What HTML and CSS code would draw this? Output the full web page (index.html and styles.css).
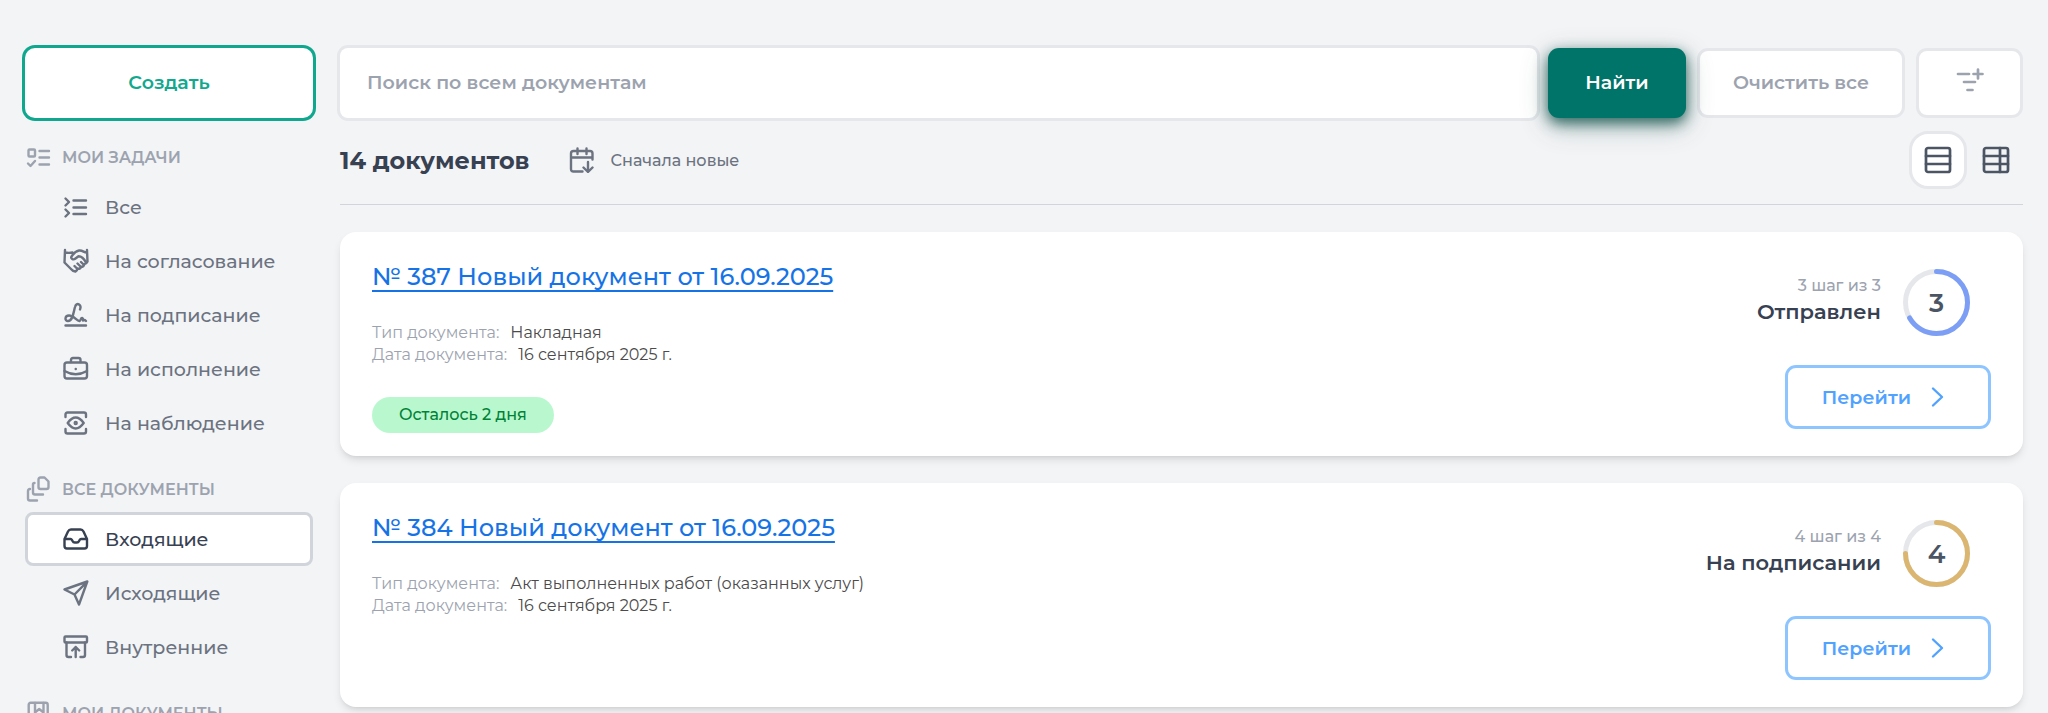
FILE: index.html
```html
<!DOCTYPE html>
<html lang="ru">
<head>
  <meta charset="UTF-8" />
  <meta name="viewport" content="width=device-width, initial-scale=1.0"/>
  <title>Входящие документы</title>
  <link rel="stylesheet" href="styles.css">
</head>
<body>
  <div class="layout">
    <aside class="sidebar">
      <button class="create-btn" type="button">Создать</button>

      <nav>
        <h2 class="menu-title">
          <svg class="icon" viewBox="-1 0 26 26"><rect x="2.5" y="5.5" width="6.5" height="7" rx="1"/><path d="M2 19.5 4.5 22 9 17M13.5 7H23M13.5 13.5H23M13.5 20.5H23"/></svg>
          МОИ ЗАДАЧИ
        </h2>
        <ul class="menu">
          <li><a class="menu-item" href="#">
            <svg class="icon" viewBox="0 0 26 26"><path d="m2.5 4.5 3.5 3.5-3.5 3.5M2.5 15.5 6 19l-3.5 3.5M10.5 6.5H23M10.5 13.5H23M10.5 20H23"/></svg>
            Все</a></li>
          <li><a class="menu-item" href="#">
            <svg class="icon" viewBox="0 0 26 26"><path d="M2 2 1.5 14.5 8 21q2.5 3 4.5 2M24 2l.5 11.5q-1 2.5-4 3M2 4.5q4 .8 7.500 0M24 4.5c-3 .5-4-2.5-8-2-3 .5-5.5 3-7.500 6-1 2 1.500 4 4 2l3-2.300c2 0 5 1.300 7.500 6.300M18 14l3 3q-1 2.500-3.500 1.500M14.500 15.500l3.500 3.500q-1 2.500-3.500 1.500M11.500 18l3 3q-.5 2-2 2.500"/></svg>
            На согласование</a></li>
          <li><a class="menu-item" href="#">
            <svg class="icon" viewBox="0 0 26 26"><path d="M17 7.5c2-5-3.5-8-5-2.5-1.500 5-2 14-7 14-3.500 0-3.500-5.500 1-5.500 5 0 8 6 10.500 5.500 1.500-.5 1-3 2.500-3 1 0 1 1.500 1 2.500q1.500-1 3 .5M2.500 23.500H23"/></svg>
            На подписание</a></li>
          <li><a class="menu-item" href="#">
            <svg class="icon" viewBox="0 0 26 26"><rect x="1.5" y="6.5" width="22.5" height="16" rx="2.5"/><path d="M8 6V4q0-2 2-2h5.5q2 0 2 2v2M1.5 15q11.2 6.5 22.5 0M12.7 13h.1"/></svg>
            На исполнение</a></li>
          <li><a class="menu-item" href="#">
            <svg class="icon" viewBox="0 0 26 26"><path d="M2.5 7V4.5q0-2 2-2H21q2 0 2 2V7M2.5 19v2.5q0 2 2 2H21q2 0 2-2V19M4.7 13q8-11 16 0-8 11-16 0z"/><circle cx="12.7" cy="13" r="1"/></svg>
            На наблюдение</a></li>
        </ul>

        <h2 class="menu-title">
          <svg class="icon" viewBox="-1 0 26 26"><path d="M14.5 1.5h4l4 4V11q0 2-2 2h-6q-2 0-2-2V3.5q0-2 2-2zM8.500 7q-1.500 0-1.500 1.500v8q0 2 2 2h8M4 13q-2 0-2 2v7.500q0 2 2 2h7"/></svg>
          ВСЕ ДОКУМЕНТЫ
        </h2>
        <ul class="menu">
          <li><a class="menu-item active" href="#">
            <svg class="icon" viewBox="0 0 26 26"><path d="M1.5 13v7q0 2.5 2.500 2.500h17.500q2.500 0 2.500-2.500v-7l-3.500-7.500q-1-2-3-2H8q-2 0-3 2L1.500 13h6q1 0 1.500 1l.5 1q.7 1.500 2.200 1.500h2.200q1.500 0 2.200-1.500l.5-1q.5-1 1.500-1H24"/></svg>
            Входящие</a></li>
          <li><a class="menu-item" href="#">
            <svg class="icon" viewBox="0 0 26 26"><path d="M1.5 9.5 24.3 1.500 16 24.500l-4.500-10zM11.500 14.500 24 1.800"/></svg>
            Исходящие</a></li>
          <li><a class="menu-item" href="#">
            <svg class="icon" viewBox="0 0 26 26"><rect x="1.5" y="2.5" width="22.5" height="6" rx="1"/><path d="M3.5 8.5V21q0 2 2 2H8M22 8.5V21q0 2-2 2h-2.5M12.700 23V13M9.200 16.500l3.500-3.500 3.500 3.500"/></svg>
            Внутренние</a></li>
        </ul>

        <h2 class="menu-title">
          <svg class="icon" viewBox="-1 0 26 26"><rect x="2.7" y="2.7" width="19" height="21" rx="2"/><path d="M9 3v9.500l4.200-3.500 4.300 3.500V3"/></svg>
          МОИ ДОКУМЕНТЫ
        </h2>
      </nav>
    </aside>

    <main class="content">
      <form class="search">
        <input class="search-input" type="search" aria-label="Поиск" placeholder="Поиск по всем документам">
        <button class="find-btn" type="submit">Найти</button>
        <button class="clear-btn" type="reset">Очистить все</button>
        <button class="filter-btn" type="button" aria-label="Добавить фильтр">
          <svg class="icon-lg" viewBox="0 0 28 28"><path d="M2 6h11M8 14h11M11.5 22h5M22 1.5v9M17.5 6h9"/></svg>
        </button>
      </form>

      <div class="results-bar">
        <h1>14 документов</h1>
        <button class="sort-btn" type="button">
          <svg class="icon" viewBox="0 0 26 26"><path d="M13.5 24.5h-9Q2 24.5 2 22V6.5Q2 4 4.5 4H21q2.500 0 2.500 2.500v6M2 10.500h21.500M8.500 1.500v5.500M17.500 1.500v5.500M19 15v10M14.500 20.500 19 25l4.500-4.500"/></svg>
          Сначала новые
        </button>
        <div class="views">
          <button class="view-btn active" type="button" aria-label="Список">
            <svg class="icon-lg" viewBox="0 0 28 28"><rect x="2" y="2" width="24" height="24" rx="2"/><path d="M2 10h24M2 18h24"/></svg>
          </button>
          <button class="view-btn" type="button" aria-label="Таблица">
            <svg class="icon-lg" viewBox="0 0 28 28"><rect x="2" y="2" width="24" height="24" rx="2"/><path d="M2 10h24M2 18h24M18 2v24"/></svg>
          </button>
        </div>
      </div>

      <article class="card">
        <div class="card-info">
          <a class="card-title" href="#">№ 387 Новый документ от 16.09.2025</a>
          <dl class="meta">
            <div><dt>Тип документа:</dt><dd>Накладная</dd></div>
            <div><dt>Дата документа:</dt><dd>16 сентября 2025 г.</dd></div>
          </dl>
          <span class="badge">Осталось 2 дня</span>
        </div>
        <div class="card-side">
          <div class="status">
            <div class="status-text">
              <span>3 шаг из 3</span>
              <strong>Отправлен</strong>
            </div>
            <div class="ring ring-blue">
              <svg viewBox="0 0 67 67"><circle class="track" cx="33.5" cy="33.5" r="31"/><circle class="value" cx="33.5" cy="33.5" r="31" pathLength="12" stroke-dasharray="8 12"/></svg>
              <span>3</span>
            </div>
          </div>
          <button class="open-btn" type="button">Перейти
            <svg class="chevron" viewBox="0 0 24 24"><path d="m7 3.5 9 8.5-9 8.5"/></svg>
          </button>
        </div>
      </article>

      <article class="card">
        <div class="card-info">
          <a class="card-title" href="#">№ 384 Новый документ от 16.09.2025</a>
          <dl class="meta">
            <div><dt>Тип документа:</dt><dd>Акт выполненных работ (оказанных услуг)</dd></div>
            <div><dt>Дата документа:</dt><dd>16 сентября 2025 г.</dd></div>
          </dl>
        </div>
        <div class="card-side">
          <div class="status">
            <div class="status-text">
              <span>4 шаг из 4</span>
              <strong>На подписании</strong>
            </div>
            <div class="ring ring-gold">
              <svg viewBox="0 0 67 67"><circle class="track" cx="33.5" cy="33.5" r="31"/><circle class="value" cx="33.5" cy="33.5" r="31" pathLength="12" stroke-dasharray="9 12"/></svg>
              <span>4</span>
            </div>
          </div>
          <button class="open-btn" type="button">Перейти
            <svg class="chevron" viewBox="0 0 24 24"><path d="m7 3.5 9 8.5-9 8.5"/></svg>
          </button>
        </div>
      </article>
    </main>
  </div>
</body>
</html>
```

FILE: styles.css
```css
* {
    box-sizing: border-box;
}
body {
    margin: 0;
    background-color: #f3f4f6;
    color: #374151;
    font-family: Montserrat, Inter, "Open Sans", sans-serif;
    font-size: 16px;
    font-weight: 500;
}
button, input {
    font: inherit;
    color: inherit;
}
button {
    cursor: pointer;
}
h1, h2, ul, dl, dd {
    margin: 0;
    padding: 0;
}
svg {
    fill: none;
    stroke: currentColor;
    stroke-width: 2.4;
    stroke-linecap: round;
    stroke-linejoin: round;
    flex-shrink: 0;
}
.icon {
    width: 26px;
    height: 26px;
}
.icon-lg {
    width: 28px;
    height: 28px;
    stroke-width: 2.7;
}
.layout {
    display: flex;
    gap: 27px;
    height: 100vh;
    padding: 48px 25px 0;
    overflow: hidden;
}

/* sidebar */
.sidebar {
    width: 288px;
    flex-shrink: 0;
}
.create-btn {
    display: block;
    width: 100%;
    height: 70px;
    padding: 0 0 2px;
    border: none;
    border-radius: 10px;
    background-color: white;
    box-shadow: 0 0 0 3px #0fa78d;
    color: #12a88e;
    font-size: 19px;
    font-weight: 600;
}
.menu-title {
    display: flex;
    align-items: center;
    gap: 11px;
    height: 46px;
    margin-top: 16px;
    color: #9ca3af;
    font-size: 16px;
    font-weight: 600;
}
.menu {
    list-style: none;
}
.menu-item {
    display: flex;
    align-items: center;
    gap: 16px;
    height: 54px;
    padding-left: 35px;
    border: 3px solid transparent;
    border-radius: 8px;
    color: #6b7280;
    font-size: 19px;
    text-decoration: none;
}
.menu-item.active {
    background-color: white;
    border-color: #d1d5db;
    color: #374151;
}

/* search row */
.content {
    flex: 1;
    min-width: 0;
}
.search {
    display: flex;
    gap: 11px;
    height: 70px;
    font-size: 19px;
    font-weight: 600;
}
.search button {
    padding: 0 0 2px;
}
.search-input {
    flex: 1;
    min-width: 0;
    padding: 0 27px 2px;
    border: none;
    border-radius: 8px;
    background-color: white;
    box-shadow: 0 0 0 3px #e5e7eb;
}
.search-input::placeholder {
    color: #9ca3af;
}
.find-btn {
    position: relative;
    width: 138px;
    border: none;
    border-radius: 11px;
    background-color: #007468;
    box-shadow: 0 5px 14px rgba(1, 70, 62, 0.75), 0 8px 28px rgba(1, 70, 62, 0.3);
    color: white;
}
.clear-btn, .filter-btn {
    border: 3px solid #e5e7eb;
    border-radius: 11px;
    background-color: white;
    color: #9ca3af;
}
.clear-btn {
    width: 208px;
}
.filter-btn {
    display: flex;
    align-items: center;
    justify-content: center;
    width: 107px;
}

/* results header */
.results-bar {
    display: flex;
    align-items: center;
    height: 87px;
    padding-bottom: 2px;
    border-bottom: 1px solid #d1d5db;
}
.results-bar h1 {
    font-size: 24px;
    font-weight: 700;
}
.sort-btn {
    display: flex;
    align-items: center;
    gap: 16px;
    margin-left: 39px;
    padding: 0;
    border: none;
    background: none;
    color: #6b7280;
}
.views {
    display: flex;
    align-items: center;
    gap: 2px;
    margin-left: auto;
}
.view-btn {
    display: flex;
    align-items: center;
    justify-content: center;
    width: 54px;
    height: 58px;
    padding: 0;
    border: none;
    background: none;
    color: #4b5563;
}
.view-btn.active {
    width: 58px;
    border: 3px solid #e5e7eb;
    border-radius: 19px;
    background-color: white;
}

/* document cards */
.card {
    display: flex;
    justify-content: space-between;
    min-height: 224px;
    margin-top: 27px;
    border-radius: 16px;
    background-color: white;
    box-shadow: 0 5px 8px -1px rgba(0, 0, 0, 0.1), 0 3px 5px -3px rgba(0, 0, 0, 0.1);
}
.card-info {
    padding: 30px 32px 23px;
}
.card-title {
    display: block;
    width: fit-content;
    color: #1673e6;
    font-size: 24px;
    line-height: 29px;
    text-decoration: underline 2px;
    text-underline-offset: 5px;
    text-decoration-skip-ink: none;
}
.meta {
    margin: 31px 0;
    font-weight: 400;
    line-height: 22px;
}
.meta div {
    display: flex;
    gap: 11px;
}
.meta dt {
    color: #9ca3af;
}
.meta dd {
    color: #4b4b4b;
}
.badge {
    display: inline-block;
    padding: 0 27px 1px;
    border-radius: 18px;
    background-color: #b9f8cf;
    color: #008236;
    line-height: 35px;
}
.card-side {
    display: flex;
    flex-direction: column;
    align-items: flex-end;
    gap: 29px;
    padding: 37px 32px 27px;
}
.status {
    display: flex;
    align-items: center;
    gap: 22px;
    margin-right: 21px;
}
.status-text {
    display: flex;
    flex-direction: column;
    gap: 2px;
    padding-bottom: 4px;
    text-align: right;
}
.status-text span {
    color: #9ca3af;
    line-height: 20px;
}
.status-text strong {
    font-size: 21px;
    font-weight: 600;
    line-height: 28px;
}
.ring {
    display: grid;
    place-items: center;
    width: 67px;
    height: 67px;
    color: #4b5563;
    font-size: 26px;
    font-weight: 600;
}
.ring svg, .ring span {
    grid-area: 1 / 1;
}
.ring svg {
    width: 67px;
    height: 67px;
    stroke-width: 5;
    transform: rotate(-90deg);
}
.ring .track {
    stroke: #e5e7eb;
}
.ring-blue .value {
    stroke: #7c9ff5;
}
.ring-gold .value {
    stroke: #dbb671;
}
.open-btn {
    display: flex;
    align-items: center;
    gap: 15px;
    height: 64px;
    padding: 0 38px 0 34px;
    border: 3px solid #8ec5ff;
    border-radius: 11px;
    background-color: white;
    color: #51a2ff;
    font-size: 19px;
    font-weight: 600;
}
.chevron {
    width: 24px;
    height: 24px;
}
```
